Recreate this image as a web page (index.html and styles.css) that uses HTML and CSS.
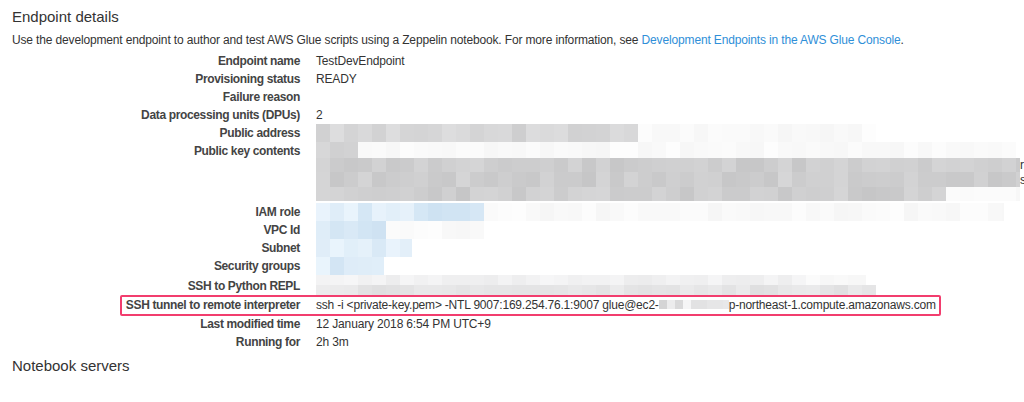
FILE: index.html
```html
<!DOCTYPE html>
<html lang="en">
  <head>
    <meta charset="UTF-8" />
    <title>Endpoint details</title>
    <link rel="stylesheet" href="styles.css">
  </head>
  <body>
    <main class="page">
      <h2 class="section-title">Endpoint details</h2>
      <p class="intro">
        Use the development endpoint to author and test AWS Glue scripts using a Zeppelin notebook. For more information, see
        <a href="#">Development Endpoints in the AWS Glue Console</a>.
      </p>

      <div class="details">
        <div class="row">
          <div class="label">Endpoint name</div>
          <div class="value">TestDevEndpoint</div>
        </div>
        <div class="row">
          <div class="label">Provisioning status</div>
          <div class="value">READY</div>
        </div>
        <div class="row">
          <div class="label">Failure reason</div>
          <div class="value"></div>
        </div>
        <div class="row">
          <div class="label">Data processing units (DPUs)</div>
          <div class="value">2</div>
        </div>
        <div class="row">
          <div class="label">Public address</div>
          <div class="value">
            <div class="mosaic" data-tone="grey-light" data-solid="310" data-fade="250" data-seed="3"></div>
          </div>
        </div>
        <div class="row row-key">
          <div class="label">Public key contents</div>
          <div class="value key-lines">
            <div class="mosaic key-first" data-tone="grey-light" data-solid="40" data-fade="660" data-seed="7"></div>
            <div class="key-line">
              <div class="mosaic" data-tone="grey" data-solid="704" data-seed="11"></div><span class="cut">r</span>
            </div>
            <div class="key-line">
              <div class="mosaic" data-tone="grey" data-solid="704" data-seed="17"></div><span class="cut">s</span>
            </div>
            <div class="key-line">
              <div class="mosaic" data-tone="grey" data-solid="622" data-fade="82" data-seed="23"></div>
            </div>
          </div>
        </div>
        <div class="row">
          <div class="label">IAM role</div>
          <div class="value">
            <div class="mosaic" data-tone="blue" data-solid="168" data-fade="520" data-seed="29"></div>
          </div>
        </div>
        <div class="row">
          <div class="label">VPC Id</div>
          <div class="value">
            <div class="mosaic" data-tone="blue" data-solid="68" data-fade="100" data-seed="31"></div>
          </div>
        </div>
        <div class="row">
          <div class="label">Subnet</div>
          <div class="value">
            <div class="mosaic" data-tone="blue" data-solid="96" data-fade="0" data-seed="37"></div>
          </div>
        </div>
        <div class="row">
          <div class="label">Security groups</div>
          <div class="value">
            <div class="mosaic" data-tone="blue" data-solid="68" data-fade="0" data-seed="41"></div>
          </div>
        </div>
        <div class="row row-repl">
          <div class="label">SSH to Python REPL</div>
          <div class="value repl-lines">
            <div class="mosaic" data-tone="haze" data-solid="480" data-fade="70" data-seed="43"></div>
            <div class="mosaic" data-tone="haze-dark" data-solid="560" data-seed="47"></div>
          </div>
        </div>
        <div class="row row-tunnel">
          <div class="label">SSH tunnel to remote interpreter</div>
          <div class="value tunnel-cmd">ssh -i &lt;private-key.pem&gt; -NTL 9007:169.254.76.1:9007 glue@ec2-<span class="mosaic inline-blur" data-tone="blur" data-solid="70" data-seed="53"></span>p-northeast-1.compute.amazonaws.com</div>
        </div>
        <div class="row">
          <div class="label">Last modified time</div>
          <div class="value">12 January 2018 6:54 PM UTC+9</div>
        </div>
        <div class="row">
          <div class="label">Running for</div>
          <div class="value">2h 3m</div>
        </div>
      </div>

      <h2 class="section-title notebook-title">Notebook servers</h2>
    </main>

    <script src="main.js"></script>
  </body>
</html>
```

FILE: styles.css
```css
body {
  margin: 0;
  background: #fff;
  color: #333;
  font-family: "Liberation Sans", Arial, sans-serif;
  font-size: 12px;
  letter-spacing: -0.15px;
  overflow: hidden;
}

.page {
  padding: 7px 0 0 12px;
}

.section-title {
  margin: 0;
  font-size: 15px;
  font-weight: normal;
  letter-spacing: 0;
  line-height: 20px;
  color: #333;
}

.intro {
  margin: 5px 0 4px;
  line-height: 16px;
  color: #333;
  white-space: nowrap;
}

.intro a {
  color: #2f8fd8;
  text-decoration: none;
}

.details {
  display: flex;
  flex-direction: column;
}

.row {
  display: flex;
  gap: 16px;
  line-height: 18px;
  min-height: 18px;
}

.label {
  flex: 0 0 288px;
  text-align: right;
  font-weight: bold;
  letter-spacing: -0.35px;
  color: #444;
}

.value {
  flex: 1;
  white-space: nowrap;
  color: #333;
}

.mosaic {
  display: flex;
  height: 18px;
}

.mosaic .cell {
  flex: 0 0 auto;
  height: 100%;
}

.row-key {
  height: 61px;
}

.key-lines {
  display: flex;
  flex-direction: column;
}

.key-first {
  height: 16px;
}

.key-line {
  display: flex;
  align-items: center;
  height: 14.4px;
}

.key-line .mosaic {
  height: 100%;
}

.cut {
  color: #333;
  font-size: 12px;
  line-height: 12px;
}

.row-repl {
  height: 20px;
  align-items: flex-end;
}

.repl-lines {
  align-self: stretch;
  display: flex;
  flex-direction: column;
}

.repl-lines .mosaic {
  height: 10px;
}

.row-tunnel {
  position: relative;
  height: 20px;
  line-height: 20px;
}

.tunnel-cmd {
  letter-spacing: -0.2px;
}

/* highlight frame drawn over the tunnel row */
.row-tunnel::after {
  content: "";
  position: absolute;
  left: 108px;
  top: 0;
  width: 817px;
  height: 17px;
  border: 2px solid #f23d6e;
  border-radius: 2px;
  pointer-events: none;
}

.inline-blur {
  display: inline-flex;
  vertical-align: middle;
  height: 9px;
  margin-top: -2px;
}

.notebook-title {
  margin-top: 5px;
}
```

FILE: main.js
```js
// Fill each .mosaic with pixel blocks to mask private values
const tones = {
  "grey": [198, 214],
  "grey-light": [206, 222],
  "haze": [236, 246],
  "haze-dark": [222, 236],
  "blur": [212, 246]
};

function rng(seed) {
  let s = seed * 9301 + 49297;
  return function () {
    s = (s * 9301 + 49297) % 233280;
    return s / 233280;
  };
}

function cellColor(tone, rand, faded) {
  if (faded) {
    const v = Math.round(246 + rand() * 7);
    return `rgb(${v},${v},${v})`;
  }
  if (tone === "blue") {
    const t = rand();
    const r = Math.round(206 + t * 28);
    const g = Math.round(226 + t * 18);
    const b = Math.round(242 + t * 10);
    return `rgb(${r},${g},${b})`;
  }
  const [lo, hi] = tones[tone];
  const v = Math.round(lo + rand() * (hi - lo));
  return `rgb(${v},${v},${v + 1})`;
}

document.querySelectorAll(".mosaic").forEach(el => {
  const tone = el.dataset.tone;
  const solid = Number(el.dataset.solid || 0);
  const fade = Number(el.dataset.fade || 0);
  const rand = rng(Number(el.dataset.seed || 1));
  const size = tone === "blur" ? 8 : 14;

  let x = 0;
  while (x < solid + fade) {
    const w = Math.min(size, solid + fade - x);
    const cell = document.createElement("span");
    cell.className = "cell";
    cell.style.width = w + "px";
    cell.style.background = cellColor(tone, rand, x >= solid);
    el.appendChild(cell);
    x += w;
  }
});
```
